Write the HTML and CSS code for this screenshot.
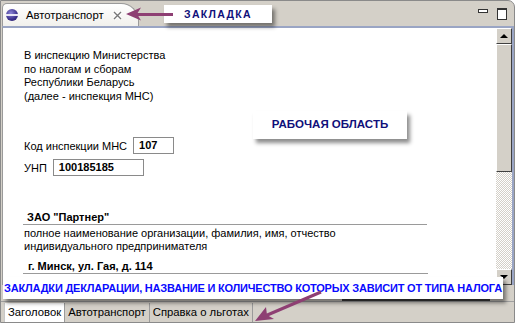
FILE: index.html
```html
<!DOCTYPE html>
<html lang="ru">
<head>
    <meta charset="UTF-8">
    <title>Автотранспорт</title>
    <link rel="stylesheet" href="styles.css">
</head>
<body>
    <div class="window">
        <div class="tabbar">
            <div class="tab">
                <span class="tab-icon"></span>
                <span class="tab-title">Автотранспорт</span>
                <svg class="tab-close" width="9" height="9" viewBox="0 0 9 9">
                    <path d="M1 1 L8 8 M8 1 L1 8" stroke="#fff" stroke-width="3.2"/>
                    <path d="M1 1 L8 8 M8 1 L1 8" stroke="#777" stroke-width="1.4"/>
                </svg>
            </div>
            <div class="controls">
                <span class="btn-min"></span>
                <span class="btn-max"></span>
            </div>
        </div>

        <div class="panel">
            <div class="content">
                <div class="doc">
                    <p class="addr">В инспекцию Министерства<br>по налогам и сборам<br>Республики Беларусь<br>(далее - инспекция МНС)</p>
                    <div class="field code">
                        <span>Код инспекции МНС</span>
                        <span class="box box-short">107</span>
                    </div>
                    <div class="field">
                        <span>УНП</span>
                        <span class="box box-long">100185185</span>
                    </div>
                    <div class="fill name">ЗАО "Партнер"</div>
                    <p class="hint">полное наименование организации, фамилия, имя, отчество<br>индивидуального предпринимателя</p>
                    <div class="fill city">г. Минск, ул. Гая, д. 114</div>
                </div>
            </div>
            <div class="vscroll">
                <div class="sb-btn"><span class="arr-up"></span></div>
                <div class="sb-thumb"></div>
                <div class="sb-track"></div>
                <div class="sb-btn"><span class="arr-down"></span></div>
            </div>
        </div>

        <div class="hscroll">
            <div class="hs-track"></div>
            <div class="hs-thumb"></div>
            <div class="hs-end"></div>
        </div>

        <div class="sheets">
            <span class="sheet active">Заголовок</span>
            <span class="sheet">Автотранспорт</span>
            <span class="sheet">Справка о льготах</span>
        </div>

        <!-- подписи поверх скриншота -->
        <div class="note note-tab">ЗАКЛАДКА</div>
        <div class="note note-work">РАБОЧАЯ ОБЛАСТЬ</div>
        <div class="note note-sheets">ЗАКЛАДКИ ДЕКЛАРАЦИИ, НАЗВАНИЕ И КОЛИЧЕСТВО КОТОРЫХ ЗАВИСИТ ОТ ТИПА НАЛОГА</div>

        <svg class="arrow arrow-top" width="50" height="16" viewBox="0 0 50 16">
            <path d="M48 8.5 L10 8.5" stroke="#8e3f73" stroke-width="3"/>
            <path d="M1 8 L16 1.5 L12 8 L16 14.5 Z" fill="#8e3f73"/>
        </svg>
        <svg class="arrow arrow-bottom" width="70" height="34" viewBox="0 0 70 34">
            <path d="M68 2 L12 26" stroke="#8e3f73" stroke-width="3"/>
            <path d="M2 31 L13 17 L14 25 L21 29 Z" fill="#8e3f73"/>
        </svg>
    </div>
</body>
</html>
```

FILE: styles.css
```css
html, body {
    margin: 0;
    padding: 0;
}
body {
    width: 515px;
    height: 323px;
    font-family: "Liberation Sans", Arial, sans-serif;
    font-size: 11px;
    color: #000;
    overflow: hidden;
}
.window {
    position: relative;
    width: 513px;
    height: 321px;
    border: 1px solid #8a8a8a;
    border-radius: 0 7px 0 0;
    background-color: #d4d0c8;
    display: flex;
    flex-direction: column;
    overflow: hidden;
}

/* верхняя закладка */
.tabbar {
    height: 25px;
    display: flex;
    align-items: flex-end;
    justify-content: space-between;
    flex-shrink: 0;
}
.tab {
    width: 132px;
    height: 22px;
    margin-left: 1px;
    padding-left: 3px;
    display: flex;
    align-items: center;
    background: linear-gradient(#ffffff, #f1f0ec);
    border: 1px solid #9a9a9a;
    border-bottom: none;
    border-radius: 5px 18px 0 0;
}
.tab-icon {
    width: 12px;
    height: 12px;
    border-radius: 50%;
    background: radial-gradient(circle at 40% 35%, #8c86d6, #3b2f8c 60%, #231a5c);
    position: relative;
    margin-right: 8px;
}
.tab-icon::after {
    content: "";
    position: absolute;
    left: 0;
    right: 0;
    top: 5px;
    height: 2px;
    background: #e8e6f6;
}
.tab-title {
    font-size: 11.3px;
}
.tab-close {
    margin-left: 9px;
}
.controls {
    display: flex;
    align-items: flex-start;
    gap: 9px;
    height: 18px;
    margin-right: 7px;
}
.btn-min {
    width: 8px;
    height: 2px;
    margin-top: 1px;
    border: 1px solid #333;
    background: #fff;
}
.btn-max {
    width: 8px;
    height: 9px;
    border: 1px solid #333;
    border-top-width: 2px;
    background: #fff;
}

/* рабочая область */
.panel {
    height: 257px;
    display: flex;
    border-top: 2px solid #9aa5c4;
    border-right: 2px solid #9aa5c4;
    border-left: 1px solid #9a9a9a;
    margin-left: 1px;
    flex-shrink: 0;
}
.content {
    flex: 1;
    background: #fff;
    overflow: hidden;
}
.doc {
    padding: 21px 0 0 21px;
}
.addr {
    margin: 0;
    line-height: 13.5px;
}
.field {
    display: flex;
    align-items: center;
    gap: 6px;
}
.field.code {
    margin-top: 34px;
}
.field + .field {
    margin-top: 5px;
}
.box {
    height: 15px;
    border: 1px solid #8a8a8a;
    font-weight: bold;
    padding-left: 5px;
    line-height: 15px;
}
.box-short {
    width: 34px;
}
.box-long {
    width: 84px;
}
.fill {
    font-weight: bold;
    width: 400px;
    line-height: 14px;
    border-bottom: 1px solid #9a9a9a;
    padding: 0 0 0 4px;
    margin-left: -1px;
}
.name {
    margin-top: 34px;
}
.hint {
    margin: 2px 0 0;
    line-height: 13px;
}
.city {
    margin-top: 6px;
    padding-left: 5px;
}

/* полосы прокрутки */
.vscroll {
    width: 16px;
    display: flex;
    flex-direction: column;
    background: #fff;
}
.sb-btn, .sb-thumb {
    background: #d4d0c8;
    border: 1px solid;
    border-color: #fff #404040 #404040 #fff;
    box-sizing: border-box;
}
.sb-btn {
    height: 16px;
    display: flex;
    align-items: center;
    justify-content: center;
}
.sb-thumb {
    height: 128px;
}
.sb-track {
    flex: 1;
    background-color: #eeece8;
    background-image: repeating-conic-gradient(#d4d0c8 0 25%, #fff 0 50%);
    background-size: 2px 2px;
}
.arr-up {
    border: 4px solid transparent;
    border-bottom: 4px solid #000;
    border-top: none;
}
.arr-down {
    border: 4px solid transparent;
    border-top: 4px solid #000;
    border-bottom: none;
}
.hscroll {
    height: 16px;
    margin: 0 4px 0 2px;
    display: flex;
    flex-shrink: 0;
}
.hs-track {
    flex: 1;
}
.hs-thumb {
    width: 148px;
    border-bottom: 2px solid #404040;
}
.hs-end {
    width: 20px;
}

/* закладки декларации */
.sheets {
    flex: 1;
    display: flex;
    align-items: flex-start;
    padding: 1px 0 0 3px;
    border-top: 1px solid #a0a0a0;
}
.sheet {
    height: 19px;
    line-height: 19px;
    padding: 0 3px;
    font-size: 11.3px;
    border-right: 1px solid #9a9a9a;
}
.sheet.active {
    background: #fff;
    border-left: 1px solid #c8c8c8;
}

/* подписи */
.note {
    position: absolute;
    background: #fff;
    font-weight: bold;
    box-shadow: 3px 4px 4px rgba(0, 0, 0, 0.45);
    text-align: center;
}
.note-tab {
    left: 163px;
    top: 4px;
    width: 108px;
    height: 18px;
    line-height: 18px;
    color: #10107a;
    font-size: 10.5px;
    letter-spacing: 1.3px;
}
.note-work {
    left: 252px;
    top: 110px;
    width: 154px;
    height: 28px;
    line-height: 26px;
    color: #10107a;
    font-size: 11.5px;
}
.note-sheets {
    left: 2px;
    top: 276px;
    width: 500px;
    height: 22px;
    line-height: 22px;
    color: #0a0aff;
    font-size: 11px;
    letter-spacing: -0.2px;
    white-space: nowrap;
}
.arrow {
    position: absolute;
}
.arrow-top {
    left: 124px;
    top: 5px;
}
.arrow-bottom {
    left: 252px;
    top: 289px;
}
```
